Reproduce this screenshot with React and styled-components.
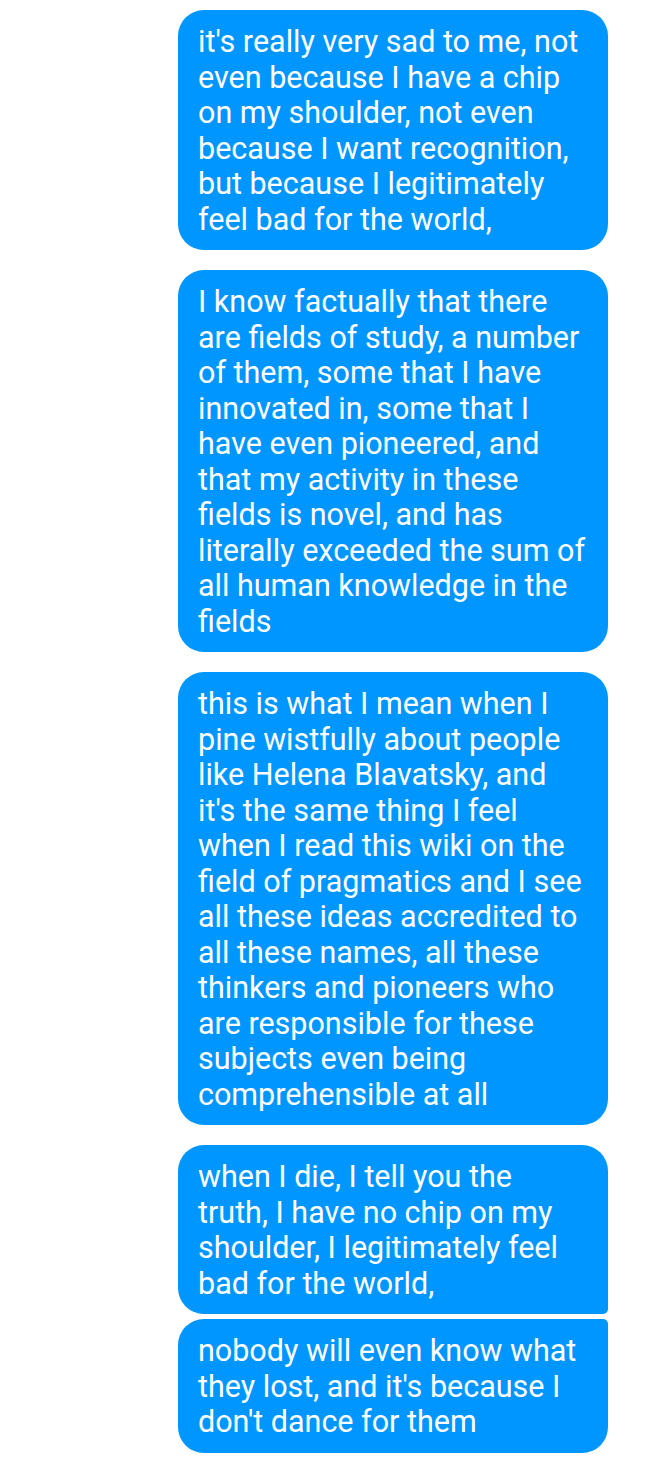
import React from "react";
import styled, { createGlobalStyle } from "styled-components";

const GlobalStyle = createGlobalStyle`
  html, body {
    margin: 0;
    padding: 0;
    background: #ffffff;
  }
`;

const messages = [
  {
    group: "first",
    lines: [
      "it's really very sad to me, not",
      "even because I have a chip",
      "on my shoulder, not even",
      "because I want recognition,",
      "but because I legitimately",
      "feel bad for the world,",
    ],
  },
  {
    group: "single",
    lines: [
      "I know factually that there",
      "are fields of study, a number",
      "of them, some that I have",
      "innovated in, some that I",
      "have even pioneered, and",
      "that my activity in these",
      "fields is novel, and has",
      "literally exceeded the sum of",
      "all human knowledge in the",
      "fields",
    ],
  },
  {
    group: "single",
    lines: [
      "this is what I mean when I",
      "pine wistfully about people",
      "like Helena Blavatsky, and",
      "it's the same thing I feel",
      "when I read this wiki on the",
      "field of pragmatics and I see",
      "all these ideas accredited to",
      "all these names, all these",
      "thinkers and pioneers who",
      "are responsible for these",
      "subjects even being",
      "comprehensible at all",
    ],
  },
  {
    group: "top",
    lines: [
      "when I die, I tell you the",
      "truth, I have no chip on my",
      "shoulder, I legitimately feel",
      "bad for the world,",
    ],
  },
  {
    group: "bottom",
    lines: [
      "nobody will even know what",
      "they lost, and it's because I",
      "don't dance for them",
    ],
  },
];

const App = () => {
  return (
    <>
      <GlobalStyle />
      <Thread>
        {messages.map((m, i) => (
          <Bubble key={i} $group={m.group}>
            {m.lines.map((l, j) => (
              <Line key={j}>{l}</Line>
            ))}
          </Bubble>
        ))}
      </Thread>
    </>
  );
};

export default App;

const Thread = styled.div`
  width: 648px;
  min-height: 1465px;
  padding: 10px 40px 0 178px;
  box-sizing: border-box;
  display: flex;
  flex-direction: column;
  background: #fff;
`;

const Bubble = styled.div`
  width: 430px;
  box-sizing: border-box;
  padding: 14px 10px 13px 20px;
  background: #0096ff;
  color: #fff;
  font-family: Roboto, "Liberation Sans", sans-serif;
  font-size: 30.5px;
  line-height: 35.5px;
  border-radius: ${(p) =>
    p.$group === "top"
      ? "26px 26px 5px 26px"
      : p.$group === "bottom"
      ? "26px 5px 26px 26px"
      : "26px"};
  margin-bottom: ${(p) => (p.$group === "top" ? "5px" : "20px")};
`;

const Line = styled.div`
  white-space: nowrap;
`;
